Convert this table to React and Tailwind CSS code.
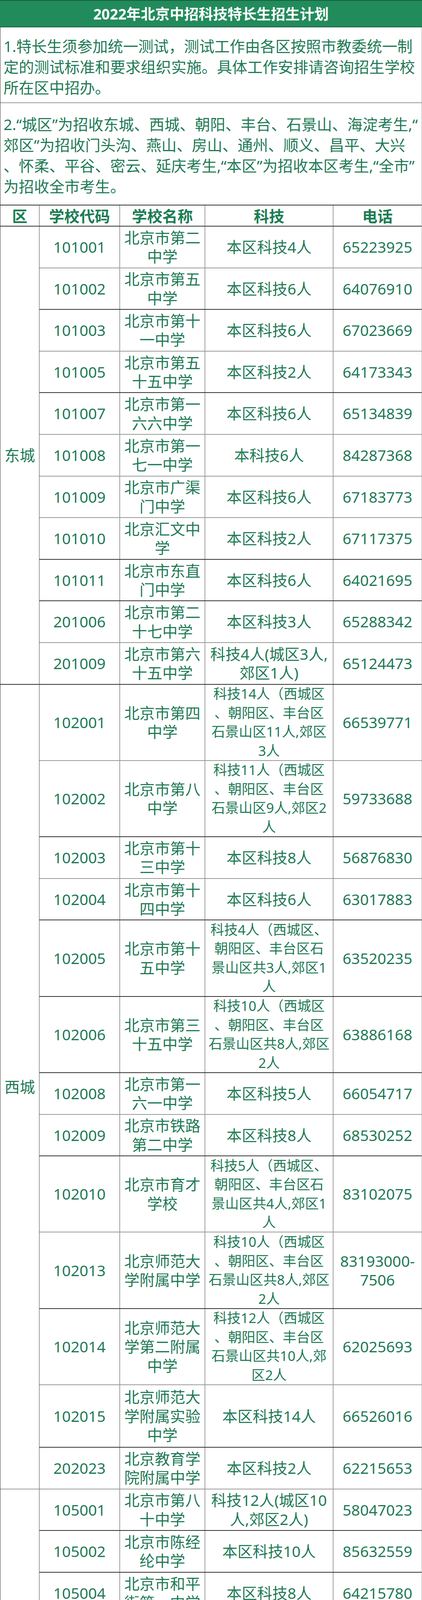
import React from "react";

const H = { 1: "h-[53px]", 2: "h-[106.6px]", 3: "h-[160px]", 4: "h-[195.3px]" };

const groups = [
  {
    name: ["东城"],
    b: "d",
    rows: [
      { c: "101001", n: ["北京市第二", "中学"], t: ["本区科技4人"], p: ["65223925"], h: 2, b: "g" },
      { c: "101002", n: ["北京市第五", "中学"], t: ["本区科技6人"], p: ["64076910"], h: 2, b: "d" },
      { c: "101003", n: ["北京市第十", "一中学"], t: ["本区科技6人"], p: ["67023669"], h: 2, b: "g" },
      { c: "101005", n: ["北京市第五", "十五中学"], t: ["本区科技2人"], p: ["64173343"], h: 2, b: "d" },
      { c: "101007", n: ["北京市第一", "六六中学"], t: ["本区科技6人"], p: ["65134839"], h: 2, b: "g" },
      { c: "101008", n: ["北京市第一", "七一中学"], t: ["本科技6人"], p: ["84287368"], h: 2, b: "g" },
      { c: "101009", n: ["北京市广渠", "门中学"], t: ["本区科技6人"], p: ["67183773"], h: 2, b: "g" },
      { c: "101010", n: ["北京汇文中", "学"], t: ["本区科技2人"], p: ["67117375"], h: 2, b: "d" },
      { c: "101011", n: ["北京市东直", "门中学"], t: ["本区科技6人"], p: ["64021695"], h: 2, b: "d" },
      { c: "201006", n: ["北京市第二", "十七中学"], t: ["本区科技3人"], p: ["65288342"], h: 2, b: "g" },
      { c: "201009", n: ["北京市第六", "十五中学"], t: ["科技4人(城区3人,", "郊区1人)"], p: ["65124473"], h: 2, b: "d" },
    ],
  },
  {
    name: ["西城"],
    b: "g",
    rows: [
      { c: "102001", n: ["北京市第四", "中学"], t: ["科技14人（西城区", "、朝阳区、丰台区", "石景山区11人,郊区", "3人"], sm: true, p: ["66539771"], h: 4, b: "g" },
      { c: "102002", n: ["北京市第八", "中学"], t: ["科技11人（西城区", "、朝阳区、丰台区", "石景山区9人,郊区2", "人"], sm: true, p: ["59733688"], h: 4, b: "d" },
      { c: "102003", n: ["北京市第十", "三中学"], t: ["本区科技8人"], p: ["56876830"], h: 2, b: "g" },
      { c: "102004", n: ["北京市第十", "四中学"], t: ["本区科技6人"], p: ["63017883"], h: 2, b: "d" },
      { c: "102005", n: ["北京市第十", "五中学"], t: ["科技4人（西城区、", "朝阳区、丰台区石", "景山区共3人,郊区1", "人"], sm: true, p: ["63520235"], h: 4, b: "d" },
      { c: "102006", n: ["北京市第三", "十五中学"], t: ["科技10人（西城区", "、朝阳区、丰台区", "石景山区共8人,郊区", "2人"], sm: true, p: ["63886168"], h: 4, b: "d" },
      { c: "102008", n: ["北京市第一", "六一中学"], t: ["本区科技5人"], p: ["66054717"], h: 2, b: "g" },
      { c: "102009", n: ["北京市铁路", "第二中学"], t: ["本区科技8人"], p: ["68530252"], h: 2, b: "d" },
      { c: "102010", n: ["北京市育才", "学校"], t: ["科技5人（西城区、", "朝阳区、丰台区石", "景山区共4人,郊区1", "人"], sm: true, p: ["83102075"], h: 4, b: "g" },
      { c: "102013", n: ["北京师范大", "学附属中学"], t: ["科技10人（西城区", "、朝阳区、丰台区", "石景山区共8人,郊区", "2人"], sm: true, p: ["83193000-", "7506"], h: 4, b: "d" },
      { c: "102014", n: ["北京师范大", "学第二附属", "中学"], t: ["科技12人（西城区", "、朝阳区、丰台区", "石景山区共10人,郊", "区2人"], sm: true, p: ["62025693"], h: 4, b: "g" },
      { c: "102015", n: ["北京师范大", "学附属实验", "中学"], t: ["本区科技14人"], p: ["66526016"], h: 3, b: "d" },
      { c: "202023", n: ["北京教育学", "院附属中学"], t: ["本区科技2人"], p: ["62215653"], h: 2, b: "g" },
    ],
  },
  {
    name: ["朝阳"],
    b: "d",
    rows: [
      { c: "105001", n: ["北京市第八", "十中学"], t: ["科技12人(城区10", "人,郊区2人)"], p: ["58047023"], h: 2, b: "d" },
      { c: "105002", n: ["北京市陈经", "纶中学"], t: ["本区科技10人"], p: ["85632559"], h: 2, b: "d" },
      { c: "105004", n: ["北京市和平", "街第一中学"], t: ["本区科技8人"], p: ["64215780"], h: 2, b: "d" },
      { c: "105007", n: ["北京工业大", "学附属中学"], t: ["本区科技8人"], p: ["58768366"], h: 2, b: "d" },
      { c: "205001", n: ["北京中学"], t: ["本区科技4人"], p: ["50951283"], h: 1, b: "g" },
      { c: "205002", n: ["中国人民大", "学附属中学", "朝阳学校"], t: ["本区科技8人"], p: ["84158116"], h: 3, b: "d" },
      { c: "205004", n: ["中国科学院", "附属实验学", "校"], t: ["科技3人(城区2人,", "郊区1人)"], p: ["82847284"], h: 3, b: "d" },
      { c: "205009", n: ["清华大学附", "属中学朝阳", "学校"], t: ["本区科技5人"], p: ["64686990"], h: 3, b: "d" },
    ],
  },
  {
    name: ["丰台"],
    b: "d",
    rows: [
      { c: "106001", n: ["北京市第十", "二中学"], t: ["本区科技1人"], p: ["83666015"], h: 2, b: "g" },
      { c: "106002", n: ["北京市第十", "中学"], t: ["本区科技4人"], p: ["83874597"], h: 2, b: "d" },
      { c: "106003", n: ["北京市第十", "八中学"], t: ["本区7人"], p: ["67638182"], h: 2, b: "d" },
      { c: "206008", n: ["首都师范大", "学附属云岗", "中学"], t: ["本区科技3人"], p: ["83318306"], h: 3, b: "g" },
      { c: "106004", n: ["北京市丰台", "区丰台第二", "中学"], t: ["本区科技1人"], p: ["63859538"], h: 3, b: "g" },
      { c: "206018", n: ["北京市航天", "中学"], t: ["本区科技3人"], p: ["88521233"], h: 2, b: "d" },
    ],
  },
  {
    name: ["石景", "山"],
    b: "d",
    rows: [
      { c: "107001", n: ["北京市第九", "中学"], t: ["本区科技8人"], p: ["88731886"], h: 2, b: "g" },
      { c: "207003", n: ["北京市京源", "学校"], t: ["本区科技3人"], p: ["68644122"], h: 2, b: "d" },
    ],
  },
];

function Lines({ items }) {
  return items.map((l, i) => <div key={i}>{l}</div>);
}

function Row({ r }) {
  const border = r.b === "g" ? "border-[#9a9a9a]" : "border-[#333]";
  return (
    <div className={`flex border-b-2 overflow-hidden ${border} ${H[r.h]}`}>
      <div className="w-[206px] shrink-0 border-r border-[#444] flex flex-col items-center justify-center text-center">
        <Lines items={[r.c]} />
      </div>
      <div className="w-[218px] shrink-0 border-r border-[#444] flex flex-col items-center justify-center text-center">
        <Lines items={r.n} />
      </div>
      <div
        className={`w-[328px] shrink-0 border-r border-[#444] flex flex-col items-center justify-center text-center ${
          r.sm ? "text-[35px]" : ""
        }`}
      >
        <Lines items={r.t} />
      </div>
      <div className="flex-1 min-w-0 flex flex-col items-center justify-center text-center">
        <Lines items={r.p} />
      </div>
    </div>
  );
}

export default function App() {
  return (
    <div className="w-[1080px] overflow-hidden bg-white font-['Noto_Sans','Noto_Sans_CJK_SC',sans-serif] text-[#1f7a56]">
      <div className="h-[70px] bg-[#228b5c] border-y-2 border-[#165e3d] flex items-center justify-center">
        <span className="text-white font-bold text-[37px] leading-none">
          2022年北京中招科技特长生招生计划
        </span>
      </div>
      <div className="border-l border-r border-l-[#333] border-r-[#aaa]">
        <div className="h-[194px] border-b-2 border-[#9a9a9a] pl-2 pt-[21px] text-[39px] leading-[53px] whitespace-nowrap overflow-hidden">
          <div>1.特长生须参加统一测试，测试工作由各区按照市教委统一制</div>
          <div>定的测试标准和要求组织实施。具体工作安排请咨询招生学校</div>
          <div>所在区中招办。</div>
        </div>
        <div className="h-[262px] border-b-2 border-[#333] pl-2 pt-[27px] text-[39px] leading-[53px] whitespace-nowrap overflow-hidden">
          <div>2.“城区”为招收东城、西城、朝阳、丰台、石景山、海淀考生,“</div>
          <div>郊区”为招收门头沟、燕山、房山、通州、顺义、昌平、大兴</div>
          <div>、怀柔、平谷、密云、延庆考生,“本区”为招收本区考生,“全市”</div>
          <div>为招收全市考生。</div>
        </div>
        <div className="h-[54px] flex border-b-2 border-[#333] font-bold text-[39px] text-[#1b7d53] leading-none">
          <div className="w-[100px] shrink-0 border-r border-[#444] flex items-center justify-center">区</div>
          <div className="w-[206px] shrink-0 border-r border-[#444] flex items-center justify-center">学校代码</div>
          <div className="w-[218px] shrink-0 border-r border-[#444] flex items-center justify-center">学校名称</div>
          <div className="w-[328px] shrink-0 border-r border-[#444] flex items-center justify-center">科技</div>
          <div className="flex-1 flex items-center justify-center">电话</div>
        </div>
        <div className="text-[39px] leading-[48.5px] whitespace-nowrap">
          {groups.map((g, gi) => (
            <div key={gi} className="flex">
              <div
                className={`w-[100px] shrink-0 border-r border-b-2 border-r-[#444] ${
                  g.b === "g" ? "border-b-[#9a9a9a]" : "border-b-[#333]"
                } flex flex-col items-center justify-center text-center leading-[52px]`}
              >
                <Lines items={g.name} />
              </div>
              <div className="flex-1 min-w-0 flex flex-col">
                {g.rows.map((r, ri) => (
                  <Row key={ri} r={r} />
                ))}
              </div>
            </div>
          ))}
        </div>
      </div>
    </div>
  );
}
